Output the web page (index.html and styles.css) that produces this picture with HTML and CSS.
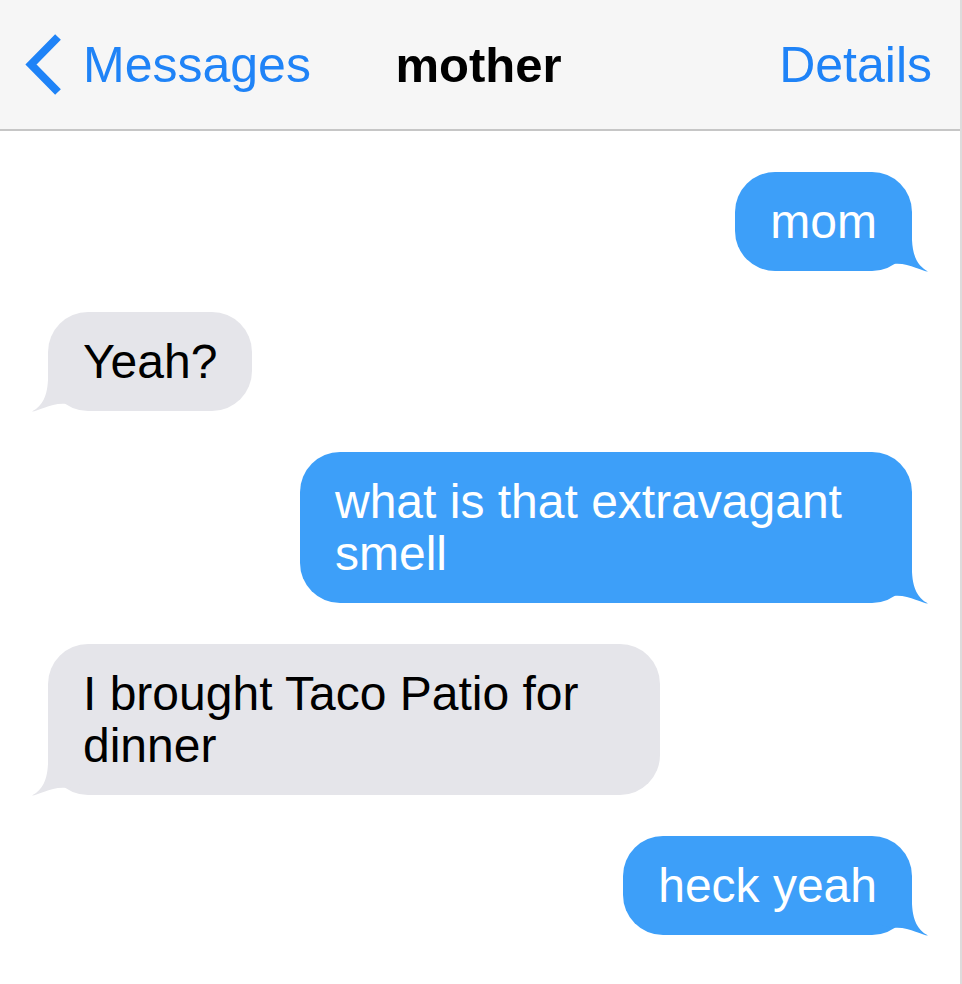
FILE: index.html
```html
<!DOCTYPE html>
<html lang="en">
<head>
<meta charset="utf-8">
<title>mother</title>
<link rel="stylesheet" href="styles.css">
</head>
<body>
<div class="screen">
  <header class="navbar">
    <a class="nav-back" href="#">
      <svg class="chevron" width="38" height="63" viewBox="0 0 38 63" aria-hidden="true">
        <polyline points="33,4 6,31.5 33,59" fill="none" stroke="currentColor" stroke-width="8" stroke-linecap="butt" stroke-linejoin="miter"/>
      </svg>
      <span>Messages</span>
    </a>
    <h1 class="nav-title">mother</h1>
    <a class="nav-action" href="#">Details</a>
  </header>
  <main class="thread">
    <div class="bubble sent">mom</div>
    <div class="bubble received">Yeah?</div>
    <div class="bubble sent">what is that extravagant smell</div>
    <div class="bubble received">I brought Taco Patio for dinner</div>
    <div class="bubble sent">heck yeah</div>
  </main>
</div>
</body>
</html>
```

FILE: styles.css
```css
* {
  box-sizing: border-box;
}

html, body {
  margin: 0;
  padding: 0;
  background: #ffffff;
}

body {
  font-family: "Liberation Sans", Arial, Helvetica, sans-serif;
}

.screen {
  width: 962px;
  min-height: 984px;
  border-right: 2px solid #dcdcdc;
  background: #ffffff;
}

.navbar {
  height: 131px;
  background: #f6f6f6;
  border-bottom: 2px solid #c6c6c6;
  display: grid;
  grid-template-columns: 1fr auto 1fr;
  align-items: center;
  padding: 0 28px 0 25px;
}

.nav-back {
  justify-self: start;
  display: flex;
  align-items: center;
  gap: 20px;
  color: #1f83f7;
  text-decoration: none;
  font-size: 50px;
  line-height: 56px;
}

.chevron {
  display: block;
  color: #1f83f7;
}

.nav-title {
  margin: 0;
  font-size: 49px;
  line-height: 56px;
  font-weight: bold;
  color: #000000;
}

.nav-action {
  justify-self: end;
  color: #1f83f7;
  text-decoration: none;
  font-size: 50px;
  line-height: 56px;
}

.thread {
  display: flex;
  flex-direction: column;
  gap: 41px;
  padding: 41px 48px 48px 48px;
}

.bubble {
  position: relative;
  max-width: 612px;
  padding: 23.5px 35px;
  border-radius: 40px;
  font-size: 48px;
  line-height: 52px;
}

.bubble::before {
  content: "";
  position: absolute;
  bottom: 0;
  width: 50px;
  height: 42px;
  clip-path: path("M34 0 L34 10 C35 30 42 37 50 41.5 C44 41.5 30 32 15 34 L0 30 L0 0 Z");
}

.sent {
  align-self: flex-end;
  background: #3d9ff9;
  color: #ffffff;
}

.sent::before {
  right: -16px;
  bottom: -1px;
  background: #3d9ff9;
}

.received {
  align-self: flex-start;
  background: #e5e5ea;
  color: #000000;
}

.received::before {
  left: -16px;
  bottom: -1px;
  background: #e5e5ea;
  transform: scaleX(-1);
}
```
